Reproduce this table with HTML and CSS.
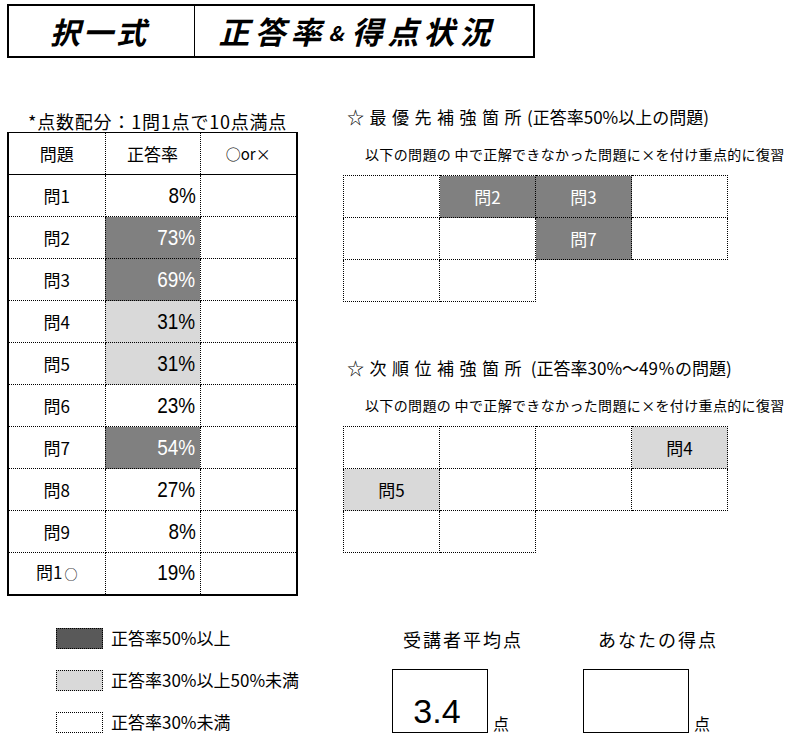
FILE: index.html
```html
<!DOCTYPE html>
<html lang="ja">
<head>
<meta charset="utf-8">
<title>択一式 正答率＆得点状況</title>
<link rel="stylesheet" href="styles.css">
</head>
<body>
<div class="header">
  <div class="header-cell header-left">択一式</div>
  <div class="header-cell header-right">正答率<span class="amp">&amp;</span>得点状況</div>
</div>

<div class="main">
  <div class="left">
    <div class="caption">*点数配分：1問1点で10点満点</div>
    <table class="score-table">
      <colgroup><col class="c1"><col class="c2"><col class="c3"></colgroup>
      <tr><th>問題</th><th>正答率</th><th class="ox">○or×</th></tr>
      <tr><td>問1</td><td class="pc"><span class="pct">8%</span></td><td></td></tr>
      <tr><td>問2</td><td class="pc dark"><span class="pct">73%</span></td><td></td></tr>
      <tr><td>問3</td><td class="pc dark"><span class="pct">69%</span></td><td></td></tr>
      <tr><td>問4</td><td class="pc light"><span class="pct">31%</span></td><td></td></tr>
      <tr><td>問5</td><td class="pc light"><span class="pct">31%</span></td><td></td></tr>
      <tr><td>問6</td><td class="pc"><span class="pct">23%</span></td><td></td></tr>
      <tr><td>問7</td><td class="pc dark"><span class="pct">54%</span></td><td></td></tr>
      <tr><td>問8</td><td class="pc"><span class="pct">27%</span></td><td></td></tr>
      <tr><td>問9</td><td class="pc"><span class="pct">8%</span></td><td></td></tr>
      <tr><td>問1<span class="ring">○</span></td><td class="pc"><span class="pct">19%</span></td><td></td></tr>
    </table>
  </div>

  <div class="right">
    <div class="title"><span class="lead">☆最優先補強箇所</span>(正答率50%以上の問題)</div>
    <div class="sub">以下の問題の 中で正解できなかった問題に×を付け重点的に復習</div>
    <table class="grid">
      <tr><td></td><td class="dark">問2</td><td class="dark">問3</td><td></td></tr>
      <tr><td></td><td></td><td class="dark">問7</td><td></td></tr>
      <tr><td></td><td></td><td class="blank"></td><td class="blank"></td></tr>
    </table>

    <div class="title title2"><span class="lead">☆次順位補強箇所</span> (正答率30%～49％の問題)</div>
    <div class="sub">以下の問題の 中で正解できなかった問題に×を付け重点的に復習</div>
    <table class="grid">
      <tr><td></td><td></td><td></td><td class="light">問4</td></tr>
      <tr><td class="light">問5</td><td></td><td></td><td></td></tr>
      <tr><td></td><td></td><td class="blank"></td><td class="blank"></td></tr>
    </table>
  </div>
</div>

<div class="bottom">
  <div class="legend">
    <div class="legend-row"><span class="swatch sw-dark"></span>正答率50%以上</div>
    <div class="legend-row"><span class="swatch sw-light"></span>正答率30%以上50%未満</div>
    <div class="legend-row"><span class="swatch"></span>正答率30%未満</div>
  </div>
  <div class="scores">
    <div class="score score1">
      <div class="score-label">受講者平均点</div>
      <div class="score-row">
        <div class="score-box">3.4</div>
        <span class="unit">点</span>
      </div>
    </div>
    <div class="score score2">
      <div class="score-label">あなたの得点</div>
      <div class="score-row">
        <div class="score-box"></div>
        <span class="unit">点</span>
      </div>
    </div>
  </div>
</div>
</body>
</html>
```

FILE: styles.css
```css
* { box-sizing: border-box; }

body {
  margin: 0;
  width: 787px;
  height: 737px;
  overflow: hidden;
  background: #fff;
  color: #000;
  font-family: "Noto Sans CJK JP", "Noto Sans", sans-serif;
}

/* Header */
.header {
  display: flex;
  margin: 4px 0 0 7px;
  width: 528px;
  height: 54px;
  border: 2px solid #000;
}
.header-cell {
  display: flex;
  align-items: center;
  justify-content: center;
  font-size: 30px;
  line-height: 34px;
  font-weight: 700;
  font-style: italic;
  letter-spacing: 3px;
}
.header-left {
  width: 186px;
  border-right: 1px solid #000;
  padding-right: 4px;
}
.header-right {
  flex: 1;
  padding-right: 14px;
  font-size: 31px;
  letter-spacing: 5px;
}
.amp {
  font-size: 20px;
  margin: 4px 3px 0 2px;
}

/* Main area */
.main {
  display: flex;
  margin-top: 52px;
}
.left {
  margin-left: 7px;
  width: 289px;
}
.caption {
  height: 22px;
  padding-left: 21px;
  font-size: 18px;
  line-height: 22px;
  letter-spacing: 0.8px;
  white-space: nowrap;
}
.score-table {
  border-collapse: collapse;
  table-layout: fixed;
  width: 289px;
  border: 2px solid #000;
  border-top-width: 1px;
}
.score-table .c1 { width: 97px; }
.score-table .c2 { width: 95px; }
.score-table .c3 { width: 97px; }
.score-table th,
.score-table td {
  height: 42px;
  padding: 0;
  border: 1px dotted #000;
  font-size: 17px;
  font-weight: 400;
  line-height: 20px;
  text-align: center;
}
.score-table th {
  border-bottom: 1px solid #000;
}
.score-table th.ox {
  font-size: 15px;
}
.ring {
  font-size: 13px;
  margin-left: 2px;
}
.score-table td.pc {
  text-align: right;
  padding-right: 4px;
}
.pct {
  display: inline-block;
  font-family: "Liberation Sans", Arial, sans-serif;
  font-size: 22px;
  line-height: 24px;
  transform: scaleX(0.86);
  transform-origin: right center;
}
.dark {
  background: #808080;
  color: #fff;
}
.light {
  background: #d9d9d9;
}

/* Right side */
.right {
  margin-left: 47px;
  margin-top: -3px;
}
.title {
  padding-left: 4px;
  font-size: 17px;
  line-height: 20px;
  white-space: nowrap;
}
.title .lead {
  letter-spacing: 5.5px;
}
.title2 {
  margin-top: 56px;
}
.sub {
  margin-top: 18px;
  padding-left: 22px;
  font-size: 14px;
  line-height: 18px;
  letter-spacing: 0.35px;
  white-space: nowrap;
}
.grid {
  margin-top: 12px;
  border-collapse: collapse;
  table-layout: fixed;
}
.grid td {
  width: 96px;
  height: 42px;
  padding: 0;
  border: 1px dotted #000;
  text-align: center;
  font-size: 17px;
  line-height: 20px;
}
.grid td.blank {
  border: none;
}

/* Bottom */
.bottom {
  display: flex;
  margin-top: 32px;
}
.legend {
  margin-left: 56px;
  width: 336px;
  display: flex;
  flex-direction: column;
  gap: 21px;
}
.legend-row {
  display: flex;
  align-items: center;
  gap: 8px;
  height: 21px;
  font-size: 17px;
  line-height: 20px;
  white-space: nowrap;
}
.swatch {
  width: 47px;
  height: 21px;
  border: 1px dotted #000;
  background: #fff;
}
.sw-dark { background: #595959; }
.sw-light { background: #d9d9d9; }

.scores {
  display: flex;
}
.score {
  width: 191px;
}
.score-label {
  margin-top: 1px;
  padding-left: 11px;
  font-size: 18px;
  line-height: 20px;
  letter-spacing: 2px;
  white-space: nowrap;
}
.score2 .score-label {
  padding-left: 15px;
}
.score-row {
  display: flex;
  align-items: flex-end;
  margin-top: 20px;
}
.score-box {
  width: 96px;
  height: 64px;
  border: 1px solid #000;
  display: flex;
  justify-content: center;
  align-items: flex-end;
  padding: 0 6px 4px 0;
  font-family: "Liberation Sans", Arial, sans-serif;
  font-size: 34px;
  line-height: 34px;
}
.score2 .score-box {
  width: 106px;
}
.unit {
  margin-left: 5px;
  font-size: 16px;
  line-height: 18px;
  margin-bottom: 1px;
}
```
